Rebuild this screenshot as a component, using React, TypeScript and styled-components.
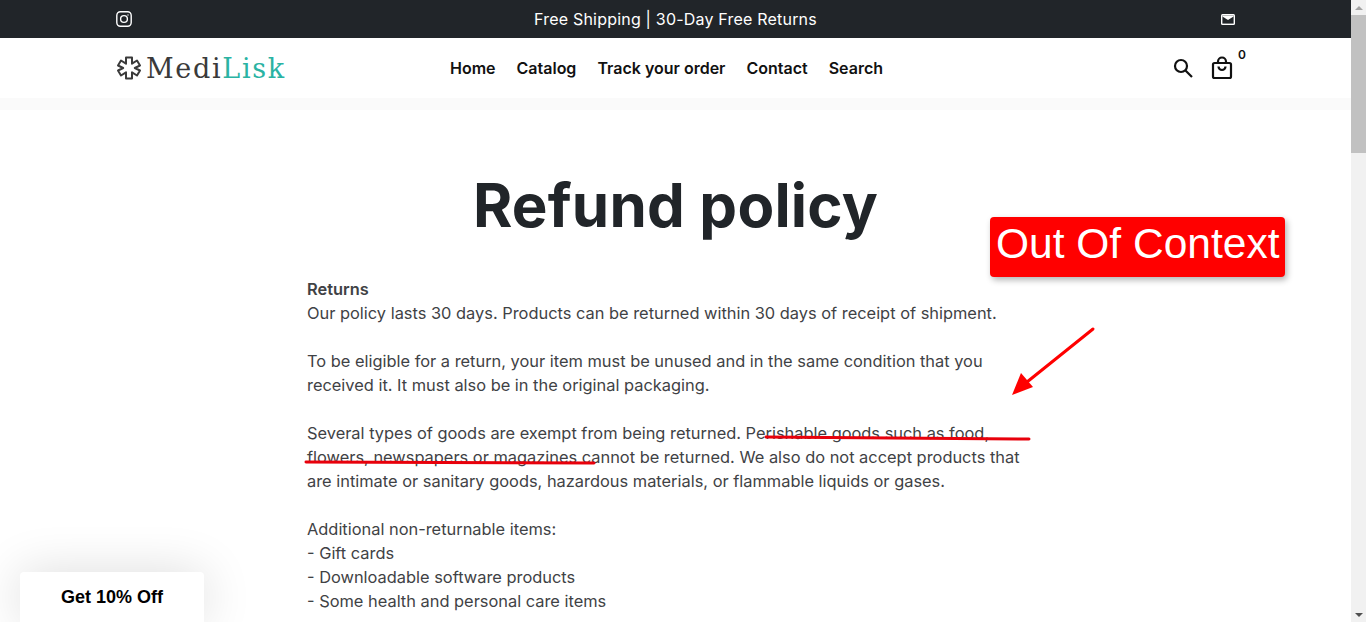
import styled, { createGlobalStyle } from "styled-components";

const GlobalStyle = createGlobalStyle`
  html, body {
    margin: 0;
    padding: 0;
    height: 100%;
    overflow: hidden;
    background: #fff;
  }
`

const Page = styled.div`
  display: flex;
  height: 622px;
  font-family: "Inter", "Open Sans", sans-serif;
`

const Main = styled.div`
  flex: 1;
  min-width: 0;
  overflow: hidden;
`

const TopBar = styled.div`
  height: 38px;
  background: #212529;
  color: #fff;
  display: grid;
  grid-template-columns: 1fr auto 1fr;
  align-items: center;
  padding: 0 116px;
  font-size: 16px;
  letter-spacing: 0.2px;
`

const TopRight = styled.div`
  display: flex;
  justify-content: flex-end;
`

const Header = styled.header`
  height: 60px;
  display: grid;
  grid-template-columns: 334px 1fr auto;
  align-items: center;
  padding: 0 116px;
  background: #fff;
`

const Logo = styled.div`
  display: flex;
  align-items: center;
  gap: 4px;
  font-family: "DejaVu Serif", serif;
  font-size: 27px;
  letter-spacing: 1.7px;
  color: #3a3a3a;
`

const LogoAccent = styled.span`
  color: #2ab3a3;
`

const Nav = styled.nav`
  display: flex;
  gap: 21px;
  font-size: 16px;
  font-weight: 600;
  color: #111;
`

const Icons = styled.div`
  display: flex;
  align-items: center;
  gap: 14px;
  margin-right: 0;
`

const Cart = styled.div`
  position: relative;
  display: flex;
`

const CartCount = styled.span`
  position: absolute;
  top: -8px;
  right: -11px;
  font-size: 12px;
  font-weight: 600;
  color: #111;
`

const Strip = styled.div`
  height: 12px;
  background: #fafafa;
`

const Content = styled.main`
  display: flex;
  flex-direction: column;
  align-items: center;
`

const Title = styled.h1`
  margin: 56px 0 33px;
  font-size: 60px;
  line-height: 78px;
  font-weight: 700;
  letter-spacing: 0.2px;
  color: #212529;
`

const Body = styled.div`
  width: 737px;
  font-size: 16.4px;
  line-height: 24px;
  color: #3f4245;
`

const Strong = styled.strong`
  font-weight: 600;
`

const Badge = styled.div`
  position: absolute;
  left: 990px;
  top: 217px;
  width: 295px;
  height: 60px;
  box-sizing: border-box;
  padding: 2px 0 0 6px;
  background: #ff0000;
  border-radius: 4px;
  box-shadow: 2px 3px 6px rgba(0, 0, 0, 0.3);
  color: #fff;
  font-family: "Liberation Sans", Arial, sans-serif;
  font-size: 42.5px;
  line-height: 49px;
`

const Scribble = styled.svg`
  position: absolute;
  left: 0;
  top: 0;
  pointer-events: none;
`

const Discount = styled.div`
  position: absolute;
  left: 20px;
  top: 572px;
  width: 184px;
  height: 50px;
  background: #fff;
  border-radius: 4px 4px 0 0;
  box-shadow: 0 0 50px rgba(0, 0, 0, 0.14);
  color: #000;
  font-family: "Liberation Sans", Arial, sans-serif;
  font-size: 18px;
  font-weight: 700;
  line-height: 50px;
  text-align: center;
`

const ScrollBar = styled.div`
  width: 15px;
  flex: none;
  background: #f1f1f1;
  display: flex;
  flex-direction: column;
  align-items: center;
`

const ScrollButton = styled.div<{ $up?: boolean }>`
  height: 15px;
  width: 15px;
  display: flex;
  align-items: center;
  justify-content: center;
  &::before {
    content: "";
    border-left: 4px solid transparent;
    border-right: 4px solid transparent;
    ${(p) => (p.$up ? "border-bottom: 4px solid #a3a3a3;" : "border-top: 4px solid #505050;")}
  }
`

const ScrollThumb = styled.div`
  width: 15px;
  height: 138px;
  background: #c1c1c1;
`

const ScrollTrack = styled.div`
  flex: 1;
`

function App() {
  return (
    <Page>
      <GlobalStyle />
      <Main>
        <TopBar>
          <svg width="16" height="16" viewBox="0 0 16 16" fill="none" stroke="#fff" strokeWidth="1.4">
            <rect x="0.8" y="0.8" width="14.4" height="14.4" rx="3.6" />
            <circle cx="8" cy="8" r="3.4" />
            <circle cx="12" cy="4" r="0.7" fill="#fff" stroke="none" />
          </svg>
          <span>Free Shipping | 30-Day Free Returns</span>
          <TopRight>
            <svg width="14" height="11" viewBox="0 0 14 11">
              <rect width="14" height="11" rx="1.5" fill="#fff" />
              <rect x="1.4" y="1.4" width="11.2" height="8.2" fill="#212529" />
              <path d="M1.4 1.4h11.2v1.2L7 6 1.4 2.6z" fill="#fff" />
            </svg>
          </TopRight>
        </TopBar>
        <Header>
          <Logo>
            <svg width="26" height="26" viewBox="0 0 26 26" fill="#fff" stroke="#3a3a3a" strokeWidth="2" strokeLinejoin="round">
              <path d="M10 2.5h6v6.2l5-3.2 3 5-5.2 2.5 5.2 2.500-3 5-5-3.200v6.200h-6v-6.200l-5 3.200-3-5 5.200-2.500-5.200-2.500 3-5 5 3.200z" />
            </svg>
            <span>
              Medi<LogoAccent>Lisk</LogoAccent>
            </span>
          </Logo>
          <Nav>
            <span>Home</span>
            <span>Catalog</span>
            <span>Track your order</span>
            <span>Contact</span>
            <span>Search</span>
          </Nav>
          <Icons>
            <svg width="24" height="24" viewBox="0 0 24 24" fill="none" stroke="#111" strokeWidth="2.200">
              <circle cx="10" cy="10" r="6" />
              <path d="M14.500 14.500 21 21" />
            </svg>
            <Cart>
              <svg width="26" height="26" viewBox="0 0 26 26" fill="none" stroke="#111" strokeWidth="2.200" strokeLinejoin="round">
                <rect x="4" y="8" width="18" height="15" rx="1.500" />
                <path d="M9 8V6.500a4 4 0 0 1 8 0V8M9.500 11.500a3.500 3.500 0 0 0 7 0" />
              </svg>
              <CartCount>0</CartCount>
            </Cart>
          </Icons>
        </Header>
        <Strip />
        <Content>
          <Title>Refund policy</Title>
          <Body>
            <Strong>Returns</Strong>
            <br />
            Our policy lasts 30 days. Products can be returned within 30 days of receipt of shipment.
            <br />
            <br />
            To be eligible for a return, your item must be unused and in the same condition that you
            <br />
            received it. It must also be in the original packaging.
            <br />
            <br />
            Several types of goods are exempt from being returned. Perishable goods such as food,
            <br />
            flowers, newspapers or magazines cannot be returned. We also do not accept products that
            <br />
            are intimate or sanitary goods, hazardous materials, or flammable liquids or gases.
            <br />
            <br />
            Additional non-returnable items:
            <br />
            - Gift cards
            <br />
            - Downloadable software products
            <br />
            - Some health and personal care items
          </Body>
        </Content>
      </Main>
      <ScrollBar>
        <ScrollButton $up />
        <ScrollThumb />
        <ScrollTrack />
        <ScrollButton />
      </ScrollBar>
      <Badge>Out Of Context</Badge>
      <Scribble width="1366" height="622" fill="none">
        <path d="M1093 329 1027 382" stroke="#f00" strokeWidth="3" strokeLinecap="round" />
        <path d="M1012 395 1021 373 1033 387z" fill="#f00" />
        <path d="M766 437 1029 439" stroke="#e8000b" strokeWidth="3" strokeLinecap="round" />
        <path d="M306 462 594 463" stroke="#e8000b" strokeWidth="3" strokeLinecap="round" />
      </Scribble>
      <Discount>Get 10% Off</Discount>
    </Page>
  );
}

export default App;
